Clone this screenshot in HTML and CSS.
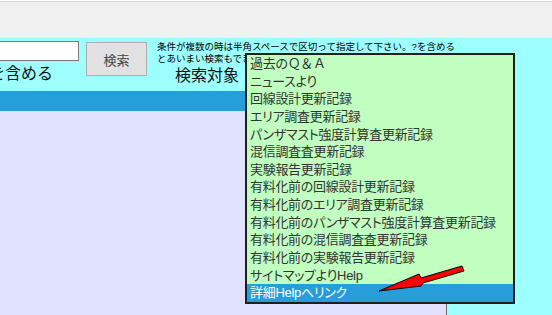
FILE: index.html
```html
<!DOCTYPE html>
<html lang="ja">
<head>
  <meta charset="UTF-8">
  <meta name="viewport" content="width=device-width, initial-scale=1.0">
  <title>検索</title>
  <link rel="stylesheet" href="styles.css">
</head>
<body>

  <div class="topbar"></div>

  <!-- 検索フォーム -->
  <div class="search">
    <div class="col-keyword">
      <input type="text" class="keyword">
      <p class="include">を含める</p>
    </div>
    <button class="search-btn">検索</button>
    <div class="col-note">
      <p class="note">条件が複数の時は半角スペースで区切って指定して下さい。?を含める<br>とあいまい検索もできます。</p>
      <p class="target">検索対象</p>
    </div>
  </div>

  <div class="main">
    <div class="panel">
      <div class="panel-head"></div>
      <div class="panel-body"></div>
    </div>
  </div>

  <!-- 検索対象のリスト（開いた状態） -->
  <ul class="target-list">
    <li>過去の<span class="wide">Ｑ＆Ａ</span></li>
    <li>ニュースより</li>
    <li>回線設計更新記録</li>
    <li>エリア調査更新記録</li>
    <li>パンザマスト強度計算査更新記録</li>
    <li>混信調査査更新記録</li>
    <li>実験報告更新記録</li>
    <li>有料化前の回線設計更新記録</li>
    <li>有料化前のエリア調査更新記録</li>
    <li>有料化前のパンザマスト強度計算査更新記録</li>
    <li>有料化前の混信調査査更新記録</li>
    <li>有料化前の実験報告更新記録</li>
    <li>サイトマップよりHelp</li>
    <li class="selected">詳細Helpへリンク</li>
  </ul>

  <!-- 赤い矢印 -->
  <svg class="arrow" width="552" height="315" viewBox="0 0 552 315">
    <polygon points="379,291 419,274 421,278 462,266 464,271 423,283 421,286" fill="#ff0000" stroke="#000" stroke-width="1"/>
  </svg>

</body>
</html>
```

FILE: styles.css
```css
body {
  font-family: 'Liberation Sans', 'Noto Sans CJK JP', sans-serif;
  background-color: #9effff;
  margin: 0;
  padding: 0;
  width: 552px;
  height: 315px;
  overflow: hidden;
  position: relative;
}

p {
  margin: 0;
}

.topbar {
  height: 38px;
  background: linear-gradient(#ffffff 0 1px, #d6d6d6 1px 2px, #f0f0f0 2px);
}

.search {
  display: flex;
  align-items: flex-start;
  height: 53px;
}

.col-keyword {
  width: 80px;
  overflow: hidden;
}

.keyword {
  display: block;
  box-sizing: border-box;
  width: 100px;
  height: 20px;
  margin: 3px 0 0 -21px;
  border: 1px solid #7a7a7a;
  background-color: #fff;
  padding: 0;
}

.include {
  margin: 4px 0 0 -11px;
  font-size: 16px;
  line-height: 18px;
  white-space: nowrap;
  color: #111;
}

.search-btn {
  box-sizing: border-box;
  width: 61px;
  height: 34px;
  margin: 4px 0 0 6px;
  background-color: #e1e1e1;
  border: 1px solid #adadad;
  color: #444;
  font-family: 'Noto Sans CJK JP', sans-serif;
  font-size: 13px;
  padding: 0;
}

.col-note {
  margin-left: 10px;
}

.note {
  margin-top: 3px;
  font-size: 9.5px;
  line-height: 12px;
  white-space: nowrap;
  color: #000;
}

.target {
  margin: 2px 0 0 18px;
  font-size: 16px;
  line-height: 18px;
  color: #111;
}

.main {
  display: flex;
}

.panel {
  width: 446px;
  height: 224px;
  border-top: 1px solid #808080;
  border-right: 1px solid #6e6e6e;
  display: flex;
  flex-direction: column;
}

.panel-head {
  height: 19px;
  background-color: #239fd9;
}

.panel-body {
  flex: 1;
  background-color: #e0e0ff;
}

.target-list {
  position: absolute;
  left: 245px;
  top: 53px;
  width: 266px;
  height: 247px;
  margin: 0;
  padding: 0;
  list-style: none;
  background-color: #c0ffc0;
  border: 2px solid #1e1e1e;
}

.target-list li {
  height: 17.64px;
  line-height: 17.64px;
  padding-left: 3px;
  font-size: 13px;
  letter-spacing: -0.3px;
  font-feature-settings: "palt";
  color: #333;
  white-space: nowrap;
}

.target-list li .wide {
  font-feature-settings: normal;
}

.target-list li.selected {
  background-color: #279ed8;
  color: #fff;
}

.arrow {
  position: absolute;
  left: 0;
  top: 0;
}
```
